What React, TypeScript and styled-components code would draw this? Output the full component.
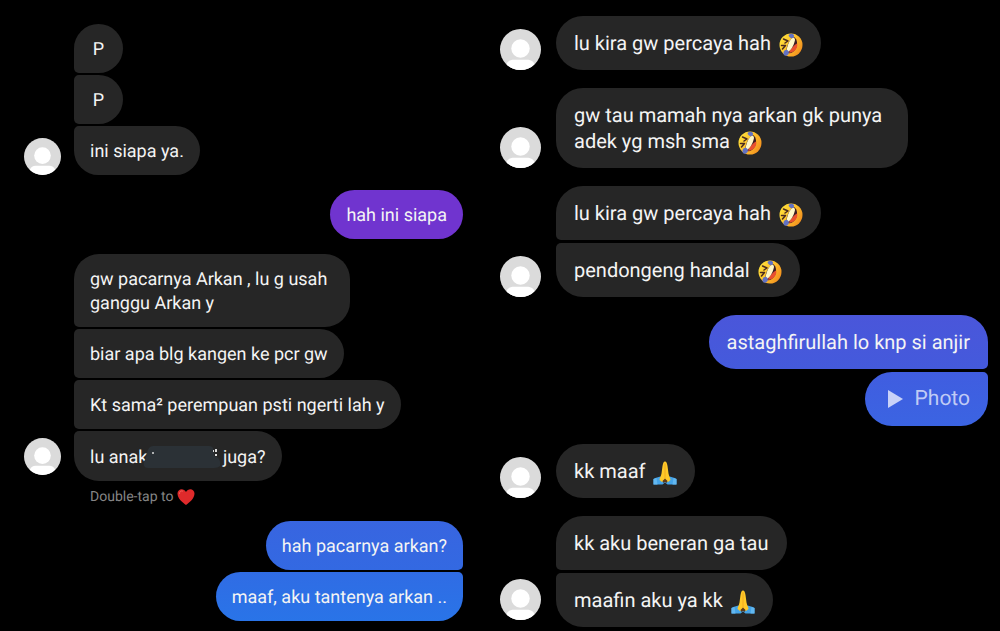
import React from "react";
import styled, { createGlobalStyle, ThemeProvider } from "styled-components";

const GlobalStyle = createGlobalStyle`
  * { box-sizing: border-box; }
  body {
    margin: 0;
    background: #000;
    color: #f4f4f4;
    font-family: Roboto, "Liberation Sans", sans-serif;
    text-rendering: geometricPrecision;
  }
`;

const compact = {
  font: 18, line: 24, padTop: 14, padBottom: 11, padX: 16, wrapEnd: 23,
  radius: 25, gap: 2, groupGap: 15, avatar: 37, avatarGap: 13, lift: 6, emoji: 21,
};

const roomy = {
  font: 20, line: 26, padTop: 14, padBottom: 14, padX: 18, wrapEnd: 26,
  radius: 27, gap: 3, groupGap: 18, avatar: 41, avatarGap: 15, lift: 7, emoji: 24,
};

declare module "styled-components" {
  export interface DefaultTheme {
    font: number; line: number; padTop: number; padBottom: number; padX: number; wrapEnd: number;
    radius: number; gap: number; groupGap: number; avatar: number; avatarGap: number; lift: number; emoji: number;
  }
}

const Page = styled.main`
  display: grid;
  grid-template-columns: 48fr 52fr;
  min-height: 100vh;
  background: #000;
`;

const Thread = styled.section<{ $pad: string }>`
  display: flex;
  flex-direction: column;
  gap: ${(p) => p.theme.groupGap}px;
  padding: ${(p) => p.$pad};
  min-width: 0;
`;

const Incoming = styled.div`
  display: flex;
  align-items: flex-end;
  gap: ${(p) => p.theme.avatarGap}px;
`;

const Stack = styled.div<{ $side: "in" | "out" }>`
  display: flex;
  flex-direction: column;
  align-items: ${(p) => (p.$side === "in" ? "flex-start" : "flex-end")};
  gap: ${(p) => p.theme.gap}px;
`;

type Place = "only" | "first" | "middle" | "last";

const corners = (side: "in" | "out", place: Place, r: number) => {
  const top = place === "middle" || place === "last" ? 5 : r;
  const bottom = place === "middle" || place === "first" ? 5 : r;
  return side === "in" ? `${top}px ${r}px ${r}px ${bottom}px` : `${r}px ${top}px ${bottom}px ${r}px`;
};

const Bubble = styled.p<{ $side?: "in" | "out"; $place?: Place; $fill?: string; $wraps?: boolean }>`
  margin: 0;
  padding: ${(p) => `${p.theme.padTop}px ${p.$wraps ? p.theme.wrapEnd : p.theme.padX}px ${p.theme.padBottom}px ${p.theme.padX}px`};
  min-width: 49px;
  text-align: ${(p) => (p.$wraps ? "left" : "center")};
  border-radius: ${(p) => corners(p.$side ?? "in", p.$place ?? "only", p.theme.radius)};
  background: ${(p) => p.$fill ?? "#262626"};
  font-size: ${(p) => p.theme.font}px;
  line-height: ${(p) => p.theme.line}px;
`;

const PhotoButton = styled.button`
  display: flex;
  align-items: center;
  gap: 12px;
  border: 0;
  padding: ${(p) => `${p.theme.padTop}px ${p.theme.padX}px ${p.theme.padBottom}px 23px`};
  border-radius: ${(p) => corners("out", "last", p.theme.radius)};
  background: linear-gradient(#405de0, #3b64e2);
  color: #c0cbf5;
  font-family: inherit;
  font-size: 21px;
  line-height: ${(p) => p.theme.line}px;
  text-rendering: inherit;
`;

const AvatarArt = styled.svg<{ $lifted?: boolean }>`
  flex: none;
  width: ${(p) => p.theme.avatar}px;
  height: ${(p) => p.theme.avatar}px;
  margin-bottom: ${(p) => (p.$lifted ? p.theme.lift : 0)}px;
  border-radius: 50%;
`;

const EmojiArt = styled.svg`
  width: ${(p) => p.theme.emoji}px;
  height: ${(p) => p.theme.emoji}px;
  margin: -2px 0 -2px 3px;
  vertical-align: -5px;
`;

const Smudge = styled.svg`
  width: 78px;
  height: 24px;
  margin: 0 -3px 0 -4px;
  vertical-align: -6px;
`;

const Hint = styled.p`
  display: flex;
  align-items: center;
  gap: 4px;
  margin: -8px 0 0 66px;
  color: #858585;
  font-size: 14px;
  line-height: 18px;
`;

const Avatar = ({ lifted }: { lifted?: boolean }) => (
  <AvatarArt $lifted={lifted} viewBox="0 0 40 40" role="img" aria-label="Profile picture">
    <rect width="40" height="40" fill="#dbdbdb" />
    <circle cx="20" cy="19" r="9" fill="#fff" />
    <path d="M6 37c0-5 3-7 8-7h12c5 0 8 2 8 7v4H6z" fill="#fff" />
  </AvatarArt>
);

const Rofl = () => (
  <EmojiArt viewBox="0 0 48 48" role="img" aria-label="rolling on the floor laughing">
    <defs>
      <linearGradient id="face" x1="0" y1="0.2" x2="1" y2="0.8">
        <stop offset="0" stopColor="#ffe23a" />
        <stop offset="0.5" stopColor="#fdbf2c" />
        <stop offset="1" stopColor="#f28a1d" />
      </linearGradient>
    </defs>
    <circle cx="24" cy="24" r="23" fill="url(#face)" />
    <path d="M30 8C37 13 38 23 33 32c-4 7-11 11-18 7C14 30 18 15 30 8z" fill="#3d1d22" />
    <path d="M36 21c2 5-1 12-7 16-3 2-6 3-9 2 2-6 9-14 16-18z" fill="#e9502f" />
    <path d="M28 9c4 1 5 4 3 9-2 8-7 16-13 20-3-1-3-4-2-8 2-9 6-17 12-21z" fill="#fff8c8" />
    <path d="M9 12l9 4-6 4M5 25l8 0-6 7" fill="none" stroke="#4a2b20" strokeWidth="3" strokeLinecap="round" strokeLinejoin="round" />
    <path d="M20 3c5-3 11-1 10 4-1 4-6 4-8 2-2-2-4-4-2-6z" fill="#6272c3" />
    <path d="M9 39c1-5 6-7 9-4 3 3 2 8-2 10-4 2-8-1-7-6z" fill="#6272c3" />
  </EmojiArt>
);

const Pray = () => (
  <EmojiArt viewBox="0 0 48 48" role="img" aria-label="folded hands">
    <path d="M1 36c5-3 9-4 14-5l9 5 9-5c5 1 9 2 14 5v11H29l-5-4-5 4H1z" fill="#45a4e8" />
    <path d="M1 36l6-2 2 13H1zM47 36l-6-2-2 13h8z" fill="#62b7f0" />
    <path d="M24 1c3 0 4 4 5 9l2 15c1 6 4 9 4 13l-5 4-6-4-6 4-5-4c0-4 3-7 4-13l2-15c1-5 2-9 5-9z" fill="#ffc928" />
    <path d="M24 5v30" stroke="#f0aa20" strokeWidth="2" />
    <path d="M19 40l5-5 5 5-2 4-3-2-3 2z" fill="#5c3b1c" />
  </EmojiArt>
);

const Heart = () => (
  <svg width="18" height="18" viewBox="0 0 36 36" role="img" aria-label="heart">
    <path d="M18 34C11 29 1 21 1 11 1 2 13-1 18 8c5-9 17-6 17 3 0 10-10 18-17 23z" fill="#df2a2b" />
    <path d="M5 11c0-4 3-6 6-5" fill="none" stroke="#f26059" strokeWidth="2" strokeLinecap="round" />
  </svg>
);

export default function App() {
  return (
    <>
      <GlobalStyle />
      <Page>
        <ThemeProvider theme={compact}>
          <Thread $pad="24px 17px 10px 24px">
            <Incoming>
              <Avatar />
              <Stack $side="in">
                <Bubble $place="first">P</Bubble>
                <Bubble $place="middle">P</Bubble>
                <Bubble $place="last">ini siapa ya.</Bubble>
              </Stack>
            </Incoming>
            <Stack $side="out">
              <Bubble $side="out" $fill="#7034cf">hah ini siapa</Bubble>
            </Stack>
            <Incoming>
              <Avatar lifted />
              <Stack $side="in">
                <Bubble $place="first" $wraps>
                  gw pacarnya Arkan , lu g usah<br />ganggu Arkan y
                </Bubble>
                <Bubble $place="middle">biar apa blg kangen ke pcr gw</Bubble>
                <Bubble $place="middle">Kt sama² perempuan psti ngerti lah y</Bubble>
                <Bubble $place="last">
                  lu anak
                  <Smudge viewBox="0 0 78 24" aria-hidden="true">
                    <path d="M10 1h56c5 0 5 5 5 10 5 1 7 5 6 10-2 2-6 2-9 2H5c-4 0-5-3-4-7 4-2 1-14 9-15z" fill="#2b3136" />
                    <circle cx="10" cy="8" r="1" fill="#ddd" />
                    <path d="M70 6h1M73 4v3M73 9v2" stroke="#ddd" strokeWidth="2" />
                  </Smudge>
                  {" "}juga?
                </Bubble>
              </Stack>
            </Incoming>
            <Hint>Double-tap to <Heart /></Hint>
            <Stack $side="out">
              <Bubble $side="out" $place="first" $fill="linear-gradient(#3865e0, #3369e2)">hah pacarnya arkan?</Bubble>
              <Bubble $side="out" $place="last" $fill="linear-gradient(#306ce4, #2974e8)">maaf, aku tantenya arkan ..</Bubble>
            </Stack>
          </Thread>
        </ThemeProvider>
        <ThemeProvider theme={roomy}>
          <Thread $pad="16px 12px 4px 20px">
            <Incoming>
              <Avatar />
              <Bubble>lu kira gw percaya hah <Rofl /></Bubble>
            </Incoming>
            <Incoming>
              <Avatar />
              <Bubble $wraps>
                gw tau mamah nya arkan gk punya<br />adek yg msh sma <Rofl />
              </Bubble>
            </Incoming>
            <Incoming>
              <Avatar />
              <Stack $side="in">
                <Bubble $place="first">lu kira gw percaya hah <Rofl /></Bubble>
                <Bubble $place="last">pendongeng handal <Rofl /></Bubble>
              </Stack>
            </Incoming>
            <Stack $side="out">
              <Bubble $side="out" $place="first" $fill="linear-gradient(#4a56da, #445adc)">astaghfirullah lo knp si anjir</Bubble>
              <PhotoButton type="button">
                <svg width="15" height="18" viewBox="0 0 15 18" aria-hidden="true">
                  <path d="M0 0l15 9-15 9z" fill="#c9d2f8" />
                </svg>
                Photo
              </PhotoButton>
            </Stack>
            <Incoming>
              <Avatar />
              <Bubble>kk maaf <Pray /></Bubble>
            </Incoming>
            <Incoming>
              <Avatar lifted />
              <Stack $side="in">
                <Bubble $place="first">kk aku beneran ga tau</Bubble>
                <Bubble $place="last">maafin aku ya kk <Pray /></Bubble>
              </Stack>
            </Incoming>
          </Thread>
        </ThemeProvider>
      </Page>
    </>
  );
}
